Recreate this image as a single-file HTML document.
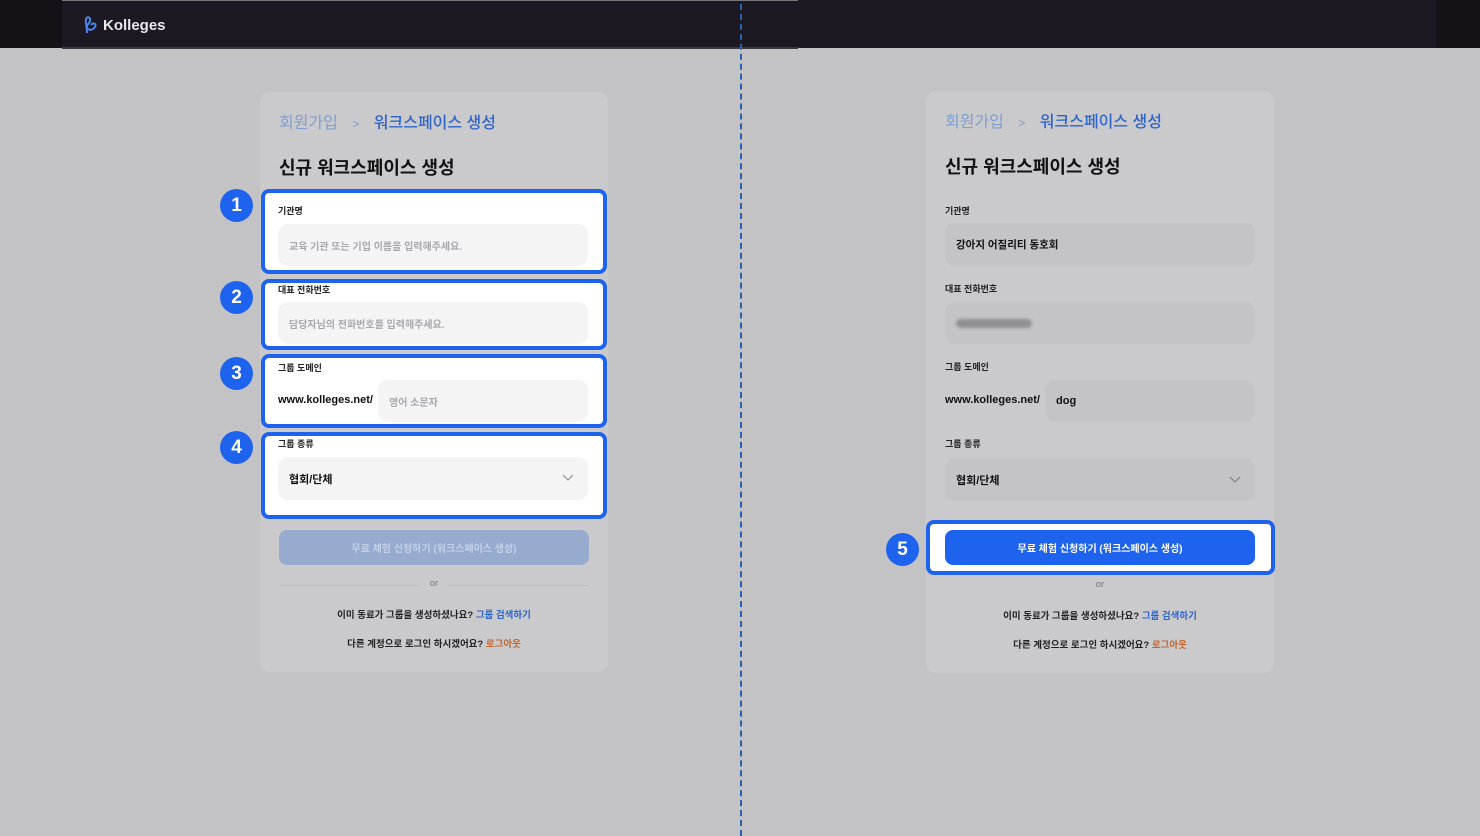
<!DOCTYPE html>
<html><head><meta charset="utf-8"><style>
*{box-sizing:border-box;margin:0;padding:0}
body{width:1480px;height:836px;background:#c3c3c5;position:relative;overflow:hidden;font-family:"Liberation Sans","Noto Sans CJK KR",sans-serif;color:#111}
.a{position:absolute}
.card{background:#cacacc;border-radius:10px}
.box{background:#fff;border:4px solid #1d63ed;border-radius:8px}
.lbl{font-size:9px;font-weight:700;color:#222}
.inp{border-radius:10px;font-size:10px;padding-left:11px;display:flex;align-items:center}
.ph{color:#a8a8ac;font-weight:700}
.num{width:33px;height:33px;border-radius:50%;background:#1d63ed;color:#fff;font-weight:700;font-size:19px;display:flex;align-items:center;justify-content:center}
.t{font-size:9.5px;text-align:center;color:#222;font-weight:700}
</style></head><body>
<div class="a" style="left:0;top:0;width:1480px;height:48px;background:#141217"></div>
<div class="a" style="left:62px;top:0;width:1374px;height:48px;background:#1c1923"></div>
<div class="a" style="left:62px;top:0;width:736px;height:1px;background:#777"></div>
<div class="a" style="left:62px;top:47px;width:736px;height:2px;background:#3a3840"></div>
<svg class="a" style="left:83px;top:15px" width="18" height="20" viewBox="0 0 18 20"><path d="M4 18 C4 10 2 8 3 4 C4 1 8 2 7 6 C6 9 3 10 4 13 C6 16 10 15 12 12 C14 9 10 7 8 10" fill="none" stroke="#4a86e8" stroke-width="2"/></svg>
<div class="a" style="left:103px;top:17px;color:#e8e8ec;font-size:15px;font-weight:700">Kolleges</div>
<div class="a" style="left:740px;top:4px;height:832px;border-left:2px dashed #2a5fb0"></div>

<!-- left card -->
<div class="a card" style="left:260px;top:92px;width:348px;height:580px"></div>
<div class="a" style="left:279px;top:109px;font-size:16px;color:#7f9ed0">회원가입 <span style="font-size:12px;margin:0 10px">&gt;</span> <b style="color:#2f64c8;font-weight:500">워크스페이스 생성</b></div>
<div class="a" style="left:279px;top:154px;font-size:18px;font-weight:700">신규 워크스페이스 생성</div>
<div class="a box" style="left:261px;top:189px;width:346px;height:85px"></div>
<div class="a box" style="left:261px;top:279px;width:346px;height:71px"></div>
<div class="a box" style="left:261px;top:354px;width:346px;height:74px"></div>
<div class="a box" style="left:261px;top:432px;width:346px;height:87px"></div>
<div class="a num" style="left:220px;top:189px">1</div>
<div class="a num" style="left:220px;top:281px">2</div>
<div class="a num" style="left:220px;top:357px">3</div>
<div class="a num" style="left:220px;top:431px">4</div>
<div class="a lbl" style="left:278px;top:204px">기관명</div>
<div class="a inp ph" style="left:278px;top:224px;width:310px;height:42px;background:#f4f4f5">교육 기관 또는 기업 이름을 입력해주세요.</div>
<div class="a lbl" style="left:278px;top:283px">대표 전화번호</div>
<div class="a inp ph" style="left:278px;top:302px;width:310px;height:42px;background:#f4f4f5">담당자님의 전화번호를 입력해주세요.</div>
<div class="a lbl" style="left:278px;top:361px">그룹 도메인</div>
<div class="a" style="left:278px;top:394px;font-size:11px;font-weight:700">www.kolleges.net/</div>
<div class="a inp ph" style="left:378px;top:380px;width:210px;height:42px;background:#f4f4f5">영어 소문자</div>
<div class="a lbl" style="left:278px;top:437px">그룹 종류</div>
<div class="a inp" style="left:278px;top:457px;width:310px;height:43px;background:#f4f4f5;font-weight:700;font-size:11px">협회/단체</div>
<svg class="a" style="left:562px;top:474px" width="12" height="8"><path d="M1 1 L6 6 L11 1" fill="none" stroke="#999" stroke-width="1.3"/></svg>
<div class="a" style="left:279px;top:530px;width:310px;height:35px;border-radius:8px;background:#97abcf;color:#c3d0e8;font-size:10px;font-weight:700;display:flex;align-items:center;justify-content:center">무료 체험 신청하기 (워크스페이스 생성)</div>
<div class="a" style="left:279px;top:585px;width:310px;height:1px;background:#bdbdbf"></div>
<div class="a t" style="left:420px;top:578px;width:28px;background:#cacacc;color:#777;font-weight:400">or</div>
<div class="a t" style="left:279px;top:607px;width:310px">이미 동료가 그룹을 생성하셨나요? <span style="color:#2f64c8">그룹 검색하기</span></div>
<div class="a t" style="left:279px;top:636px;width:310px">다른 계정으로 로그인 하시겠어요? <span style="color:#c0672e">로그아웃</span></div>

<!-- right card -->
<div class="a card" style="left:926px;top:91px;width:348px;height:582px"></div>
<div class="a" style="left:945px;top:108px;font-size:16px;color:#7f9ed0">회원가입 <span style="font-size:12px;margin:0 10px">&gt;</span> <b style="color:#2f64c8;font-weight:500">워크스페이스 생성</b></div>
<div class="a" style="left:945px;top:153px;font-size:18px;font-weight:700">신규 워크스페이스 생성</div>
<div class="a lbl" style="left:945px;top:204px">기관명</div>
<div class="a inp" style="left:945px;top:223px;width:310px;height:43px;background:#c4c4c6;font-weight:700;font-size:10.5px">강아지 어질리티 동호회</div>
<div class="a lbl" style="left:945px;top:282px">대표 전화번호</div>
<div class="a inp" style="left:945px;top:302px;width:310px;height:42px;background:#c4c4c6"><div style="width:76px;height:9px;border-radius:5px;background:#8f8f91;filter:blur(1.5px)"></div></div>
<div class="a lbl" style="left:945px;top:360px">그룹 도메인</div>
<div class="a" style="left:945px;top:394px;font-size:11px;font-weight:700">www.kolleges.net/</div>
<div class="a inp" style="left:1045px;top:380px;width:210px;height:42px;background:#c4c4c6;font-weight:700;font-size:11px">dog</div>
<div class="a lbl" style="left:945px;top:437px">그룹 종류</div>
<div class="a inp" style="left:945px;top:458px;width:310px;height:43px;background:#c4c4c6;font-weight:700;font-size:11px">협회/단체</div>
<svg class="a" style="left:1229px;top:476px" width="12" height="8"><path d="M1 1 L6 6 L11 1" fill="none" stroke="#888" stroke-width="1.3"/></svg>
<div class="a box" style="left:926px;top:520px;width:349px;height:55px"></div>
<div class="a" style="left:945px;top:530px;width:310px;height:35px;border-radius:8px;background:#1d63ed;color:#fff;font-size:10px;font-weight:700;display:flex;align-items:center;justify-content:center">무료 체험 신청하기 (워크스페이스 생성)</div>
<div class="a num" style="left:886px;top:533px">5</div>
<div class="a t" style="left:945px;top:579px;width:310px;color:#777;font-weight:400">or</div>
<div class="a t" style="left:945px;top:608px;width:310px">이미 동료가 그룹을 생성하셨나요? <span style="color:#2f64c8">그룹 검색하기</span></div>
<div class="a t" style="left:945px;top:637px;width:310px">다른 계정으로 로그인 하시겠어요? <span style="color:#c0672e">로그아웃</span></div>
</body></html>
